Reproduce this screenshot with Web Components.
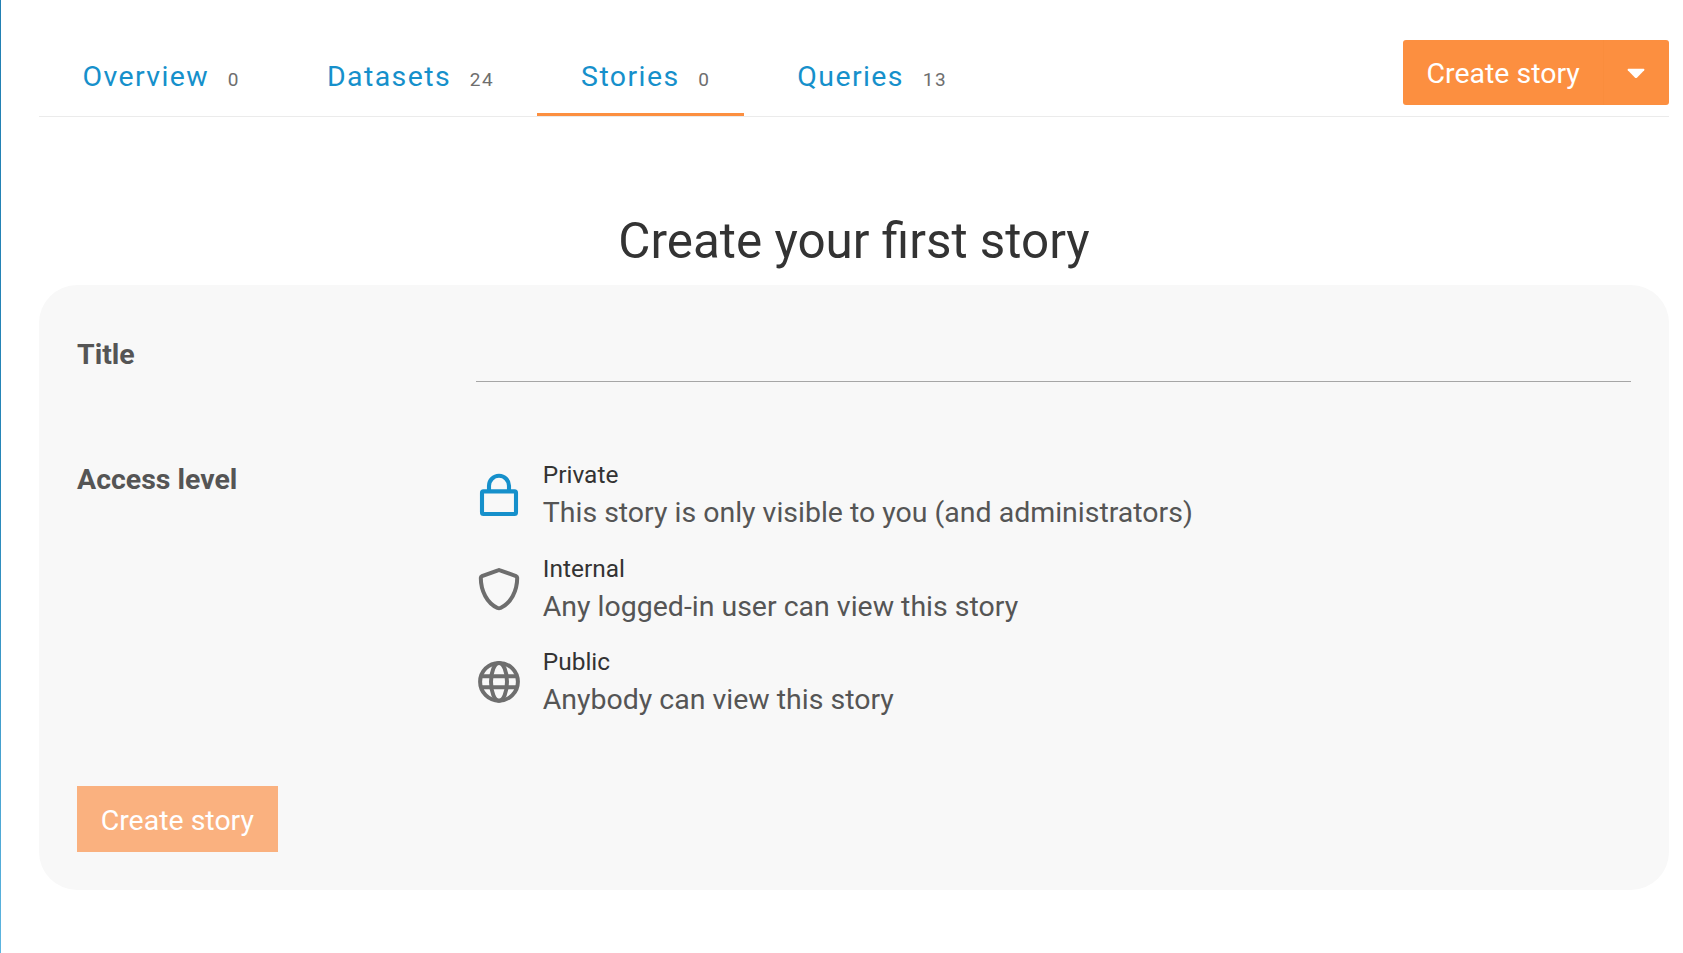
<!DOCTYPE html>
<html lang="en">
<head>
<meta charset="utf-8">
<title>Stories</title>
<style>
html,body{margin:0;height:100%}
body{background:#fff;font-family:Roboto,"Liberation Sans",sans-serif;font-size:28.48px;color:#555;overflow:hidden}
</style>
</head>
<body>
<stories-page></stories-page>
<script>
const define = (name, html) => {
  const t = document.createElement('template');
  t.innerHTML = '<style>*{box-sizing:border-box}</style>' + html;
  customElements.define(name, class extends HTMLElement {
    constructor() {
      super();
      this.attachShadow({ mode: 'open' }).append(t.content.cloneNode(true));
    }
  });
};

define('nav-tab', `<style>
:host{display:flex;box-sizing:border-box;height:100%;align-items:baseline;padding:19px 33.3px 0 43.7px;margin-right:9.8px;letter-spacing:1.42px;line-height:36px;color:#1690cb;border-bottom:3px solid transparent;white-space:nowrap}
:host([active]){border-bottom-color:#fc8f40}
small{font-size:19px;letter-spacing:1.6px;color:#6e6e6e;margin-left:18.7px}
</style><span><slot></slot></span><small><slot name="count"></slot></small>`);

define('split-button', `<style>
:host{display:flex;width:266.2px;height:65.4px;background:#fc8f40;color:#fff;border-radius:3px;overflow:hidden}
.main{width:200.6px;padding-left:23.7px;line-height:67px;white-space:nowrap}
.drop{flex:1;display:flex;align-items:center;justify-content:center;border-left:1px solid #fa8d3d;padding:2px 1px 0 0}
svg{display:block}
</style><div class="main"><slot></slot></div><div class="drop"><svg width="18" height="11" viewBox="0 0 18 11"><path d="M1.2.8h15.6q1.1.5.4 1.4L10.2 9.4Q9 10.400 7.800 9.400L.8 2.200Q.2 1.300 1.200.8Z" fill="#fff"/></svg></div>`);

define('tab-bar', `<style>
:host{display:flex;height:77px;border-bottom:1px solid #ebebeb;justify-content:space-between;align-items:flex-start}
nav{display:flex;height:100%;margin-left:-.3px}
</style><nav><slot></slot></nav><slot name="action"></slot>`);

define('form-row', `<style>
:host{display:grid;grid-template-columns:399px 1fr}
label{font-weight:700;line-height:36px}
</style><label><slot name="label"></slot></label><div><slot></slot></div>`);

define('text-line', `<style>
:host{display:block;height:45px;border-bottom:1px solid #a6a6a6}
</style>`);

define('access-option', `<style>
:host{display:flex;height:93.6px;color:#6e6e6e}
:host([selected]){color:#1690cb}
.icon{width:66.8px;padding-top:15px}
::slotted(svg){display:block}
.name{font-size:24.45px;line-height:36px;color:#333}
.hint{line-height:40px;color:#555;white-space:nowrap}
</style><div class="icon"><slot name="icon"></slot></div><div><div class="name"><slot name="name"></slot></div><div class="hint"><slot></slot></div></div>`);

define('submit-button', `<style>
:host{display:block;width:201px;height:66px;line-height:69px;padding-left:23.7px;box-sizing:border-box;background:#fab17f;color:#fff;white-space:nowrap}
</style><slot></slot>`);

define('story-form', `<style>
:host{display:block;height:605px;box-sizing:border-box;background:#f8f8f8;border-radius:38px;padding:52px 38px 0}
.access{margin-top:80px}
.options{margin-top:-5px}
submit-button{margin-top:48px}
</style>
<form-row><span slot="label">Title</span><text-line></text-line></form-row>
<form-row class="access"><span slot="label">Access level</span>
<div class="options">
<access-option selected><svg slot="icon" width="46" height="46" viewBox="0 0 46 46"><g fill="none" stroke="currentColor" stroke-width="4.1"><rect x="6" y="19.400" width="34" height="22.600" rx="1.500"/><path d="M13 19v-5.200a10 10 0 0 1 20 0V19"/></g></svg><span slot="name">Private</span>This story is only visible to you (and administrators)</access-option>
<access-option><svg slot="icon" width="46" height="46" viewBox="0 0 46 46"><path d="M22 4.300Q23 3.900 24 4.300L40 10Q41.200 10.500 41.200 11.800C41.200 25 35 37 24.500 42Q23 42.600 21.500 42C11 37 4.800 25 4.800 11.800Q4.800 10.500 6 10Z" fill="none" stroke="currentColor" stroke-width="4"/></svg><span slot="name">Internal</span>Any logged-in user can view this story</access-option>
<access-option><svg slot="icon" width="46" height="46" viewBox="0 0 46 46"><g fill="none" stroke="currentColor" stroke-width="4"><circle cx="23" cy="22.800" r="18.900"/><ellipse cx="23" cy="22.800" rx="8" ry="18.900"/><path d="M5 17.300h36M5 28.300h36"/></g></svg><span slot="name">Public</span>Anybody can view this story</access-option>
</div></form-row>
<submit-button>Create story</submit-button>`);

define('stories-page', `<style>
:host{display:flex;height:953px}
.edge{width:1px;background:linear-gradient(#2280b3,#2686b8 50%,#5db5e0)}
main{flex:1;padding:40px 14px 0 38px}
h1{margin:0;height:168px;padding-top:90px;font-size:49.4px;line-height:68px;font-weight:400;text-align:center;color:#333}
</style>
<div class="edge"></div>
<main>
<tab-bar>
<nav-tab>Overview<span slot="count">0</span></nav-tab>
<nav-tab>Datasets<span slot="count">24</span></nav-tab>
<nav-tab active>Stories<span slot="count">0</span></nav-tab>
<nav-tab>Queries<span slot="count">13</span></nav-tab>
<split-button slot="action">Create story</split-button>
</tab-bar>
<h1>Create your first story</h1>
<story-form></story-form>
</main>`);
</script>
</body>
</html>
